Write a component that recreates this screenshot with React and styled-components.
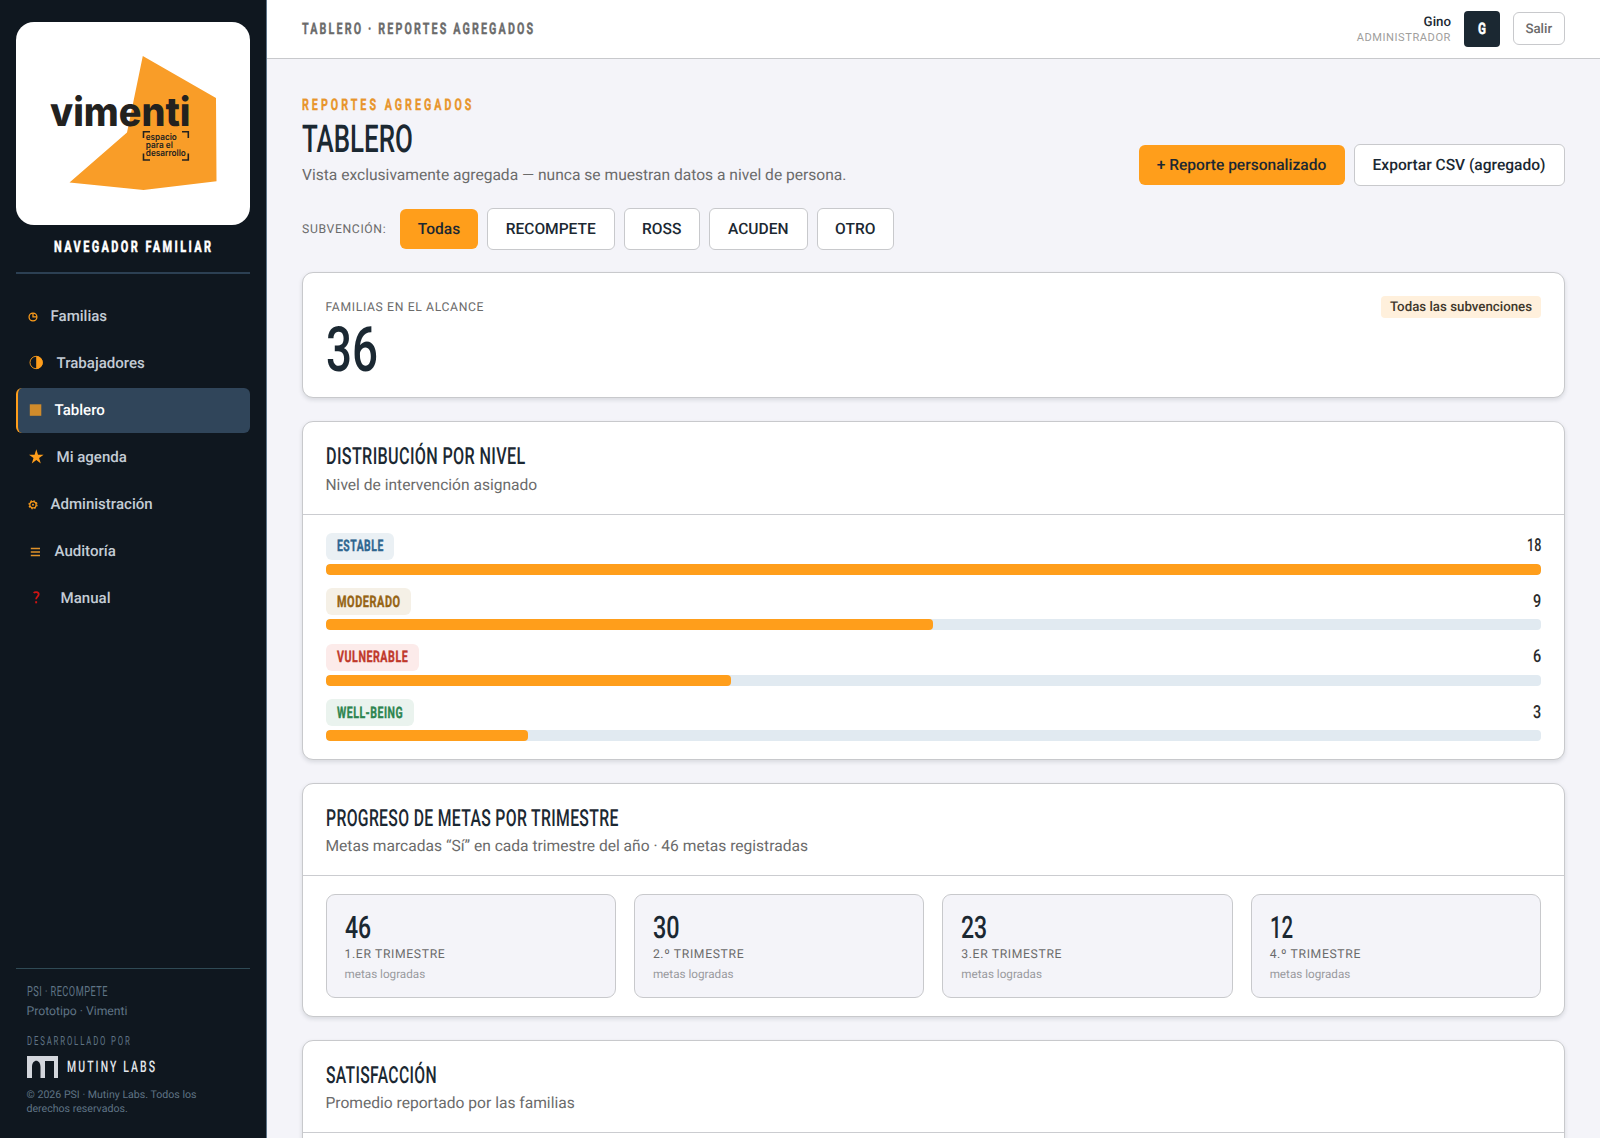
import React, { useLayoutEffect, useRef, useState } from 'react';
import styled, { createGlobalStyle } from 'styled-components';

const GlobalStyle = createGlobalStyle`
    * {
        box-sizing: border-box;
    }
    body {
        margin: 0;
        background: #f4f4f9;
        font-family: Roboto, sans-serif;
        font-size: 16px;
        color: #1b2832;
        overflow: hidden;
        text-rendering: geometricPrecision;
    }
    h1, h2, p {
        margin: 0;
        font-weight: 400;
    }
    button {
        font-family: inherit;
        text-rendering: inherit;
    }
`;

const Layout = styled.div`
    display: grid;
    grid-template-columns: 267px 1fr;
    grid-template-rows: 1138px;
    height: 1138px;
    overflow: hidden;
`;

const Sidebar = styled.aside`
    display: flex;
    flex-direction: column;
    min-height: 0;
    padding: 22px 16px 22px 15.5px;
    background: #0f171f;
    border-right: 1px solid #5d7488;
`;

const LogoCard = styled.div`
    flex: none;
    height: 202.5px;
    border-radius: 18px;
    background: #fff;
    overflow: hidden;

    svg {
        display: block;
    }
`;

const Brand = styled.div`
    display: flex;
    justify-content: center;
    padding: 14px 0 17.5px;
    border-bottom: 2px solid #2c4053;
    color: #fff;
`;

const Nav = styled.nav`
    display: flex;
    flex-direction: column;
    gap: 2px;
    padding-top: 19.5px;
`;

const NavItem = styled.a`
    display: flex;
    align-items: center;
    height: 45px;
    padding-left: 10px;
    border-left: 2.5px solid ${({ $active }) => ($active ? '#ff9e1b' : 'transparent')};
    border-radius: 6px;
    background: ${({ $active }) => ($active ? '#30455a' : 'transparent')};
    color: ${({ $active }) => ($active ? '#fff' : '#c3ccd5')};
    font-size: 15.05px;
    font-weight: 500;
`;

const NavIcon = styled.span`
    display: flex;
    flex: none;
    width: ${({ $width }) => $width}px;

    svg {
        display: block;
    }
`;

const SideFooter = styled.div`
    flex: none;
    height: 148px;
    margin-top: auto;
    padding: 15.5px 0 0 11px;
    border-top: 1px solid #2f4a55;
    color: #5f7485;
    font-size: 12.2px;
    line-height: 19px;
`;

const Program = styled.div`
    height: 17.5px;
`;

const DevLabel = styled.div`
    margin-top: 14.5px;
    height: 18.5px;
`;

const DevLogo = styled.div`
    display: flex;
    align-items: center;
    gap: 8.5px;
    height: 22px;
    margin-top: 1.5px;
    color: #e4e7ec;
`;

const Copyright = styled.p`
    margin-top: 10px;
    font-size: 10.6px;
    line-height: 14.6px;
`;

const Page = styled.main`
    display: flex;
    flex-direction: column;
    min-width: 0;
`;

const TopBar = styled.header`
    display: flex;
    align-items: center;
    justify-content: space-between;
    flex: none;
    height: 59px;
    padding: 0 35.5px 1px 35px;
    background: #fff;
    border-bottom: 1px solid #c8c9cc;
    color: #6b6b6b;
`;

const UserArea = styled.div`
    display: flex;
    align-items: center;
    gap: 13px;
`;

const UserText = styled.div`
    padding-top: 3px;
    text-align: right;
    line-height: 15px;
`;

const UserName = styled.div`
    color: #1b2832;
    font-size: 13.3px;
    font-weight: 500;
`;

const UserRole = styled.div`
    color: #a09e9c;
    font-size: 11.1px;
    letter-spacing: 0.55px;
`;

const Avatar = styled.div`
    display: flex;
    align-items: center;
    justify-content: center;
    width: 36px;
    height: 36px;
    border-radius: 4px;
    background: #1b2832;
    color: #fff;
`;

const LogoutButton = styled.button`
    width: 51.5px;
    height: 33.5px;
    padding: 1px 0 0;
    border: 1.5px solid #c8c9cc;
    border-radius: 6px;
    background: #fff;
    color: #6b6b6b;
    font-size: 13.3px;
    font-weight: 500;
`;

const Content = styled.div`
    display: flex;
    flex-direction: column;
    padding: 36px 35.5px 0 35px;
`;

const PageHead = styled.div`
    display: flex;
    justify-content: space-between;
    align-items: flex-end;
    height: 91px;
`;

const HeadText = styled.div`
    display: flex;
    flex-direction: column;
    height: 91px;
    padding-top: 2px;
`;

const Eyebrow = styled.div`
    height: 24px;
    color: #e8952b;
`;

const Title = styled.h1`
    height: 44px;
`;

const Muted = styled.p`
    color: #6b6b6b;
    font-size: 15.58px;
    line-height: 21px;
`;

const Actions = styled.div`
    display: flex;
    align-items: center;
    gap: 9px;
    padding-bottom: 0.5px;
`;

const Button = styled.button`
    width: ${({ $width }) => $width}px;
    height: ${({ $primary }) => ($primary ? 40 : 42)}px;
    padding: 0;
    border: ${({ $primary }) => ($primary ? 'none' : '1px solid #c8c9cc')};
    border-radius: 6px;
    background: ${({ $primary }) => ($primary ? '#ff9e1b' : '#fff')};
    color: #1b2832;
    font-size: 15.56px;
    font-weight: 500;
    white-space: nowrap;
`;

const Filters = styled.div`
    display: flex;
    align-items: center;
    gap: 9px;
    margin-top: 22px;
`;

const Caption = styled.span`
    color: #6b6b6b;
    font-size: 12.2px;
    line-height: 18px;
    letter-spacing: 0.64px;
    white-space: nowrap;
`;

const FilterLabel = styled(Caption)`
    width: 89px;
`;

const Card = styled.section`
    margin-top: 23px;
    border: 1px solid #c8c9cc;
    border-radius: 11px;
    background: #fff;
    box-shadow: 0 2px 4px rgba(27, 40, 50, 0.13);
`;

const ScopeCard = styled(Card)`
    display: flex;
    justify-content: space-between;
    align-items: flex-start;
    height: 126px;
    margin-top: 22.4px;
    padding: 22.5px;
`;

const ScopeCount = styled.div`
    height: 60px;
    margin-top: 4.5px;
`;

const ScopeTag = styled.span`
    width: 160px;
    height: 22px;
    border-radius: 4px;
    background: #fff0dc;
    color: #40382c;
    font-size: 13.3px;
    font-weight: 500;
    line-height: 23px;
    text-align: center;
`;

const CardHead = styled.div`
    height: 92.3px;
    padding: 23px 22.5px 0;
    border-bottom: 1px solid #cbccd0;
`;

const CardTitle = styled.h2`
    height: 29.5px;
`;

const Levels = styled.div`
    display: flex;
    flex-direction: column;
    gap: 13.5px;
    padding: 18px 22.5px 17.5px;
`;

const LevelTop = styled.div`
    display: flex;
    justify-content: space-between;
    align-items: center;
    height: 27px;
    color: #2b2b2b;
`;

const LevelBadge = styled.span`
    display: flex;
    align-items: center;
    height: 27px;
    padding: 0 11.5px 0 11px;
    border-radius: 6px;
    background: ${({ $bg }) => $bg};
    color: ${({ $color }) => $color};
`;

const Track = styled.div`
    height: 11px;
    margin-top: 4px;
    border-radius: 4px;
    background: #e1eaf1;
    overflow: hidden;
`;

const Fill = styled.div`
    height: 100%;
    border-radius: 4px;
    background: #ff9e1b;
`;

const Quarters = styled.div`
    display: grid;
    grid-template-columns: repeat(4, 1fr);
    gap: 18px;
    padding: 18px 22.5px;
`;

const Quarter = styled.div`
    height: 104px;
    padding: 17px 18px;
    border: 1px solid #c8c9cc;
    border-radius: 9px;
    background: #f4f4f9;
`;

const QuarterCount = styled.div`
    height: 31.5px;
`;

const QuarterNote = styled.div`
    margin-top: 2px;
    color: #999a9e;
    font-size: 11.7px;
    line-height: 18px;
`;

const FitBox = styled.span`
    display: block;
    width: ${({ $width }) => $width}px;
    height: ${({ $size }) => $size}px;
    white-space: nowrap;
`;

const FitText = styled.span`
    display: inline-block;
    vertical-align: top;
    font-family: Roboto, sans-serif;
    font-size: ${({ $size }) => $size}px;
    line-height: ${({ $size }) => $size}px;
    font-weight: ${({ $weight }) => $weight};
    letter-spacing: ${({ $spacing }) => $spacing}px;
    -webkit-text-stroke: ${({ $weight }) => ($weight > 600 ? 0.4 : 0)}px currentColor;
    transform-origin: 0 50%;
`;

// Condensed display type: squeezes a line of text to the given width.
function Condensed({ children, width, size, weight = 500, spacing = 0 }) {
    const ref = useRef(null);
    const [scale, setScale] = useState(1);

    useLayoutEffect(() => {
        setScale(width / (ref.current.offsetWidth - spacing));
    }, [width, size, weight, spacing]);

    return (
        <FitBox $width={width} $size={size}>
            <FitText
                ref={ref}
                $size={size}
                $weight={weight}
                $spacing={spacing}
                style={{ transform: `scaleX(${scale})` }}
            >
                {children}
            </FitText>
        </FitBox>
    );
}

function VimentiLogo() {
    return (
        <svg width="235" height="202" viewBox="15.5 22 235 202">
            <path d="M142.3 56 L215.5 98 L216 181.3 L143 190 L69 182.5 L126.5 132.5 Z" fill="#f99d28" />
            <text x="49.5" y="126" textLength="140.5" lengthAdjust="spacingAndGlyphs" fontFamily="Inter, sans-serif" fontWeight="800" fontSize="40" fill="#23221f">vimenti</text>
            <g fontFamily="Inter, sans-serif" fontWeight="600" fontSize="9.2" fill="#23221f">
                <text x="145.3" y="139.8" textLength="31" lengthAdjust="spacingAndGlyphs">espacio</text>
                <text x="145.3" y="148.2" textLength="27" lengthAdjust="spacingAndGlyphs">para el</text>
                <text x="145.3" y="156.4" textLength="40" lengthAdjust="spacingAndGlyphs">desarrollo</text>
            </g>
            <path d="M143 138v-6.2h6.5M181.5 131.8h6.3v6.2M143 153.5v6.5h6.5M181.5 160h6.3v-6.5" fill="none" stroke="#23221f" strokeWidth="1.6" />
        </svg>
    );
}

function MutinyLogo() {
    return (
        <svg width="31.5" height="22" viewBox="0 0 31.5 22">
            <path d="M0 0H31.5V22H27V5H18V22H13.5V11C13.5 2.5 5 2.5 5 11V22H0Z" fill="#d3d6dc" />
        </svg>
    );
}

const icons = {
    pie: (
        <svg width="24" height="16" viewBox="0 0 24 16">
            <circle cx="5.2" cy="9" r="4.1" fill="none" stroke="#ff9e1b" strokeWidth="1.3" />
            <path d="M5.2 5v4h4" fill="none" stroke="#ff9e1b" strokeWidth="1.3" />
        </svg>
    ),
    half: (
        <svg width="24" height="16" viewBox="0 0 24 16">
            <circle cx="8.2" cy="7.5" r="6.2" fill="none" stroke="#ff9e1b" strokeWidth="0.9" />
            <path d="M8.2 1a6.5 6.5 0 0 1 0 13Z" fill="#ff9e1b" />
        </svg>
    ),
    square: (
        <svg width="24" height="16" viewBox="0 0 24 16">
            <path d="M1.8 2.3h11.5v11.5h-11.5Z" fill="#d08b2b" />
        </svg>
    ),
    star: (
        <svg width="24" height="16" viewBox="0 0 24 16">
            <path d="M8.3 0.3l1.7 5.4h5.6l-4.5 3.2 1.7 5.6-4.5-3.4-4.5 3.4 1.7-5.6-4.5-3.2h5.6Z" fill="#ff9e1b" />
        </svg>
    ),
    gear: (
        <svg width="24" height="16" viewBox="0 0 24 16">
            <circle cx="5.2" cy="8.8" r="3.3" fill="none" stroke="#ff9e1b" strokeWidth="1.3" />
            <circle cx="5.2" cy="8.8" r="4.2" fill="none" stroke="#ff9e1b" strokeWidth="1.2" strokeDasharray="1.65 1.65" />
            <circle cx="5.2" cy="8.8" r="1" fill="#ff9e1b" />
        </svg>
    ),
    lines: (
        <svg width="24" height="16" viewBox="0 0 24 16">
            <path d="M2.8 5.5h9.2M2.8 9h9.2M2.8 12.5h9.2" stroke="#e0922a" strokeWidth="1.6" />
        </svg>
    ),
    question: (
        <svg width="24" height="16" viewBox="0 0 24 16">
            <path d="M5.7 3c1-1.2 5-1.5 5 1.3 0 2.3-2.6 2.3-2.6 5" fill="none" stroke="#cf1414" strokeWidth="1.8" />
            <path d="M7.2 11.2h1.9v2.1h-1.9Z" fill="#cf1414" />
        </svg>
    ),
};

const navItems = [
    { label: 'Familias', icon: 'pie', width: 23 },
    { label: 'Trabajadores', icon: 'half', width: 29 },
    { label: 'Tablero', icon: 'square', width: 27, active: true },
    { label: 'Mi agenda', icon: 'star', width: 29 },
    { label: 'Administración', icon: 'gear', width: 23 },
    { label: 'Auditoría', icon: 'lines', width: 27 },
    { label: 'Manual', icon: 'question', width: 33 },
];

const filters = [
    { label: 'Todas', width: 78, active: true },
    { label: 'RECOMPETE', width: 127.5 },
    { label: 'ROSS', width: 76.5 },
    { label: 'ACUDEN', width: 98.5 },
    { label: 'OTRO', width: 77.5 },
];

const levels = [
    { name: 'ESTABLE', textWidth: 46, count: 18, countWidth: 14, color: '#2f6690', bg: '#eaf0f4' },
    { name: 'MODERADO', textWidth: 63, count: 9, countWidth: 8, color: '#966414', bg: '#f5f0e6' },
    { name: 'VULNERABLE', textWidth: 71, count: 6, countWidth: 8, color: '#c0392b', bg: '#fcebea' },
    { name: 'WELL-BEING', textWidth: 66, count: 3, countWidth: 8, color: '#2e8550', bg: '#eaf3ee' },
];

const quarters = [
    { label: '1.ER TRIMESTRE', count: 46, width: 26 },
    { label: '2.º TRIMESTRE', count: 30, width: 26.5 },
    { label: '3.ER TRIMESTRE', count: 23, width: 26 },
    { label: '4.º TRIMESTRE', count: 12, width: 23 },
];

function App() {
    const max = Math.max(...levels.map(level => level.count));

    return (
        <Layout>
            <GlobalStyle />
            <Sidebar>
                <LogoCard>
                    <VimentiLogo />
                </LogoCard>
                <Brand>
                    <Condensed width={157} size={16} weight={800} spacing={3.5}>NAVEGADOR FAMILIAR</Condensed>
                </Brand>
                <Nav>
                    {navItems.map(item => (
                        <NavItem key={item.label} $active={item.active}>
                            <NavIcon $width={item.width}>{icons[item.icon]}</NavIcon>
                            {item.label}
                        </NavItem>
                    ))}
                </Nav>
                <SideFooter>
                    <Program>
                        <Condensed width={80.5} size={14} weight={400} spacing={0.7}>PSI · RECOMPETE</Condensed>
                    </Program>
                    <div>Prototipo · Vimenti</div>
                    <DevLabel>
                        <Condensed width={103} size={12.5} weight={400} spacing={3}>DESARROLLADO POR</Condensed>
                    </DevLabel>
                    <DevLogo>
                        <MutinyLogo />
                        <Condensed width={88} size={16} weight={500} spacing={3.2}>MUTINY LABS</Condensed>
                    </DevLogo>
                    <Copyright>© 2026 PSI · Mutiny Labs. Todos los<br />derechos reservados.</Copyright>
                </SideFooter>
            </Sidebar>
            <Page>
                <TopBar>
                    <Condensed width={231} size={16} weight={700} spacing={3.2}>TABLERO · REPORTES AGREGADOS</Condensed>
                    <UserArea>
                        <UserText>
                            <UserName>Gino</UserName>
                            <UserRole>ADMINISTRADOR</UserRole>
                        </UserText>
                        <Avatar>
                            <Condensed width={8} size={16} weight={800}>G</Condensed>
                        </Avatar>
                        <LogoutButton>Salir</LogoutButton>
                    </UserArea>
                </TopBar>
                <Content>
                    <PageHead>
                        <HeadText>
                            <Eyebrow>
                                <Condensed width={169.5} size={16} weight={700} spacing={4.5}>REPORTES AGREGADOS</Condensed>
                            </Eyebrow>
                            <Title>
                                <Condensed width={111} size={38.5}>TABLERO</Condensed>
                            </Title>
                            <Muted>Vista exclusivamente agregada — nunca se muestran datos a nivel de persona.</Muted>
                        </HeadText>
                        <Actions>
                            <Button $primary $width={206}>+ Reporte personalizado</Button>
                            <Button $width={211}>Exportar CSV (agregado)</Button>
                        </Actions>
                    </PageHead>
                    <Filters>
                        <FilterLabel>SUBVENCIÓN:</FilterLabel>
                        {filters.map(filter => (
                            <Button key={filter.label} $primary={filter.active} $width={filter.width}>
                                {filter.label}
                            </Button>
                        ))}
                    </Filters>
                    <ScopeCard>
                        <div>
                            <Caption>FAMILIAS EN EL ALCANCE</Caption>
                            <ScopeCount>
                                <Condensed width={52} size={62.5}>36</Condensed>
                            </ScopeCount>
                        </div>
                        <ScopeTag>Todas las subvenciones</ScopeTag>
                    </ScopeCard>
                    <Card>
                        <CardHead>
                            <CardTitle>
                                <Condensed width={199} size={23.5} spacing={0.5}>DISTRIBUCIÓN POR NIVEL</Condensed>
                            </CardTitle>
                            <Muted>Nivel de intervención asignado</Muted>
                        </CardHead>
                        <Levels>
                            {levels.map(level => (
                                <div key={level.name}>
                                    <LevelTop>
                                        <LevelBadge $bg={level.bg} $color={level.color}>
                                            <Condensed width={level.textWidth} size={15.8} weight={700} spacing={0.8}>
                                                {level.name}
                                            </Condensed>
                                        </LevelBadge>
                                        <Condensed width={level.countWidth} size={18}>{level.count}</Condensed>
                                    </LevelTop>
                                    <Track>
                                        <Fill style={{ width: `${(level.count / max) * 100}%` }} />
                                    </Track>
                                </div>
                            ))}
                        </Levels>
                    </Card>
                    <Card>
                        <CardHead>
                            <CardTitle>
                                <Condensed width={292.5} size={23.5} spacing={0.5}>PROGRESO DE METAS POR TRIMESTRE</Condensed>
                            </CardTitle>
                            <Muted>Metas marcadas “Sí” en cada trimestre del año · 46 metas registradas</Muted>
                        </CardHead>
                        <Quarters>
                            {quarters.map(quarter => (
                                <Quarter key={quarter.label}>
                                    <QuarterCount>
                                        <Condensed width={quarter.width} size={31}>{quarter.count}</Condensed>
                                    </QuarterCount>
                                    <Caption>{quarter.label}</Caption>
                                    <QuarterNote>metas logradas</QuarterNote>
                                </Quarter>
                            ))}
                        </Quarters>
                    </Card>
                    <Card>
                        <CardHead>
                            <CardTitle>
                                <Condensed width={110.5} size={23.5} spacing={0.5}>SATISFACCIÓN</Condensed>
                            </CardTitle>
                            <Muted>Promedio reportado por las familias</Muted>
                        </CardHead>
                        <Levels />
                    </Card>
                </Content>
            </Page>
        </Layout>
    );
}

export default App;
